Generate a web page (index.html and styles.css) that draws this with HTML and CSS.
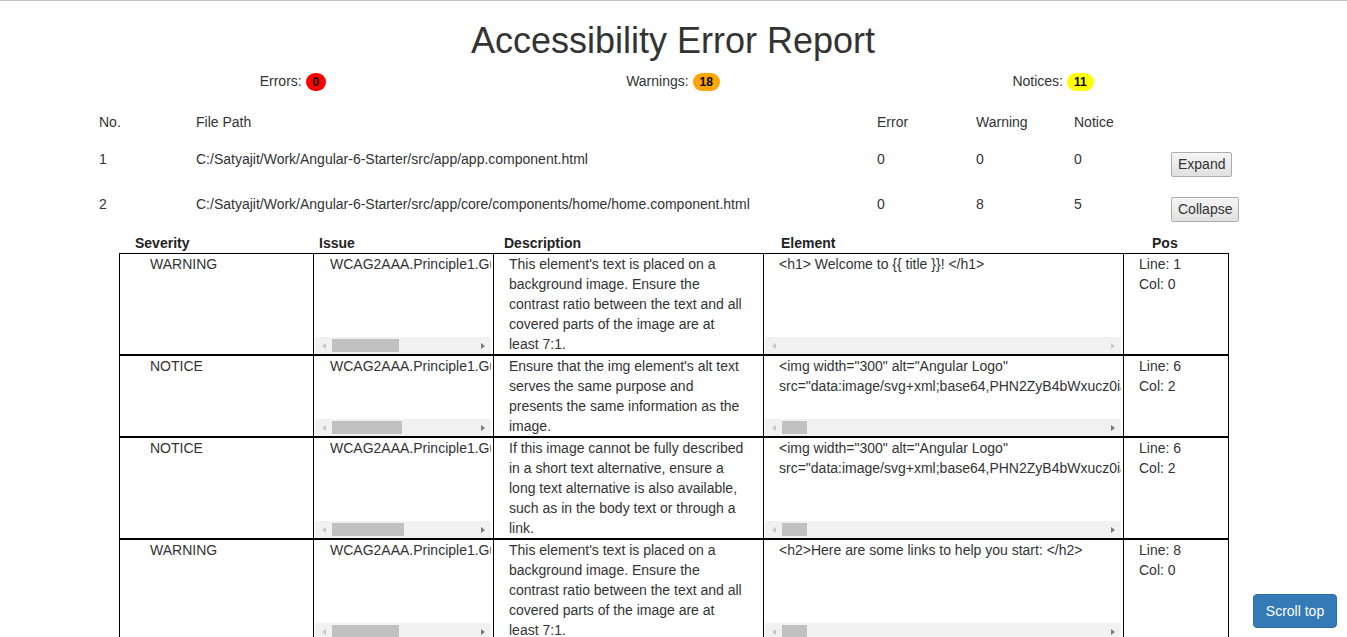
FILE: index.html
```html
<!DOCTYPE html>
<html lang="en">
<head>
<meta charset="utf-8">
<title>Accessibility Error Report</title>
<link rel="stylesheet" href="styles.css">
</head>
<body>
<div class="container">
  <h1 class="title">Accessibility Error Report</h1>
  <div class="stats">
    <div class="stat">Errors: <span class="badge badge-error">0</span></div>
    <div class="stat">Warnings: <span class="badge badge-warning">18</span></div>
    <div class="stat">Notices: <span class="badge badge-notice">11</span></div>
  </div>

  <div class="files">
    <div class="file-row file-head">
      <div class="c">No.</div>
      <div class="c">File Path</div>
      <div class="c">Error</div>
      <div class="c">Warning</div>
      <div class="c">Notice</div>
      <div class="c"></div>
    </div>
    <div class="file-row file-item">
      <div class="c">1</div>
      <div class="c">C:/Satyajit/Work/Angular-6-Starter/src/app/app.component.html</div>
      <div class="c">0</div>
      <div class="c">0</div>
      <div class="c">0</div>
      <div class="c"><button class="btn">Expand</button></div>
    </div>
    <div class="file-row file-item">
      <div class="c">2</div>
      <div class="c">C:/Satyajit/Work/Angular-6-Starter/src/app/core/components/home/home.component.html</div>
      <div class="c">0</div>
      <div class="c">8</div>
      <div class="c">5</div>
      <div class="c"><button class="btn">Collapse</button></div>
    </div>
  </div>

  <div class="details">
    <div class="det-head">
      <div class="h-sev">Severity</div>
      <div class="h-issue">Issue</div>
      <div class="h-desc">Description</div>
      <div class="h-el">Element</div>
      <div class="h-pos">Pos</div>
    </div>

    <div class="det-row">
      <div class="sev">WARNING</div>
      <div class="scroll-cell issue">
        <div class="scroll-text">WCAG2AAA.Principle1.Guideline1_4.1_4_6.G17.BgImage</div>
        <div class="hbar"><span class="arr arr-l off"></span><span class="thumb" style="width:67px"></span><span class="fill"></span><span class="arr arr-r"></span></div>
      </div>
      <div class="desc">This element's text is placed on a background image. Ensure the contrast ratio between the text and all covered parts of the image are at least 7:1.</div>
      <div class="scroll-cell element">
        <div class="scroll-text">&lt;h1&gt; Welcome to {{ title }}! &lt;/h1&gt;</div>
        <div class="hbar"><span class="arr arr-l off"></span><span class="fill"></span><span class="arr arr-r off"></span></div>
      </div>
      <div class="pos">Line: 1<br>Col: 0</div>
    </div>

    <div class="det-row">
      <div class="sev">NOTICE</div>
      <div class="scroll-cell issue">
        <div class="scroll-text">WCAG2AAA.Principle1.Guideline1_1.1_1_1.G94.Image</div>
        <div class="hbar"><span class="arr arr-l off"></span><span class="thumb" style="width:70px"></span><span class="fill"></span><span class="arr arr-r"></span></div>
      </div>
      <div class="desc">Ensure that the img element's alt text serves the same purpose and presents the same information as the image.</div>
      <div class="scroll-cell element">
        <div class="scroll-text">&lt;img width="300" alt="Angular Logo" <span class="nw">src="data:image/svg+xml;base64,PHN2ZyB4bWxucz0iaHR0cDovL3d3dy53My5vcmcvMjAwMC9zdmciIHZpZXdCb3g9IjAgMCAyNTAgMjUwIj4=" /&gt;</span></div>
        <div class="hbar"><span class="arr arr-l off"></span><span class="thumb" style="width:25px"></span><span class="fill"></span><span class="arr arr-r"></span></div>
      </div>
      <div class="pos">Line: 6<br>Col: 2</div>
    </div>

    <div class="det-row">
      <div class="sev">NOTICE</div>
      <div class="scroll-cell issue">
        <div class="scroll-text">WCAG2AAA.Principle1.Guideline1_1.1_1_1.G73,G74</div>
        <div class="hbar"><span class="arr arr-l off"></span><span class="thumb" style="width:72px"></span><span class="fill"></span><span class="arr arr-r"></span></div>
      </div>
      <div class="desc">If this image cannot be fully described in a short text alternative, ensure a long text alternative is also available, such as in the body text or through a link.</div>
      <div class="scroll-cell element">
        <div class="scroll-text">&lt;img width="300" alt="Angular Logo" <span class="nw">src="data:image/svg+xml;base64,PHN2ZyB4bWxucz0iaHR0cDovL3d3dy53My5vcmcvMjAwMC9zdmciIHZpZXdCb3g9IjAgMCAyNTAgMjUwIj4=" /&gt;</span></div>
        <div class="hbar"><span class="arr arr-l off"></span><span class="thumb" style="width:25px"></span><span class="fill"></span><span class="arr arr-r"></span></div>
      </div>
      <div class="pos">Line: 6<br>Col: 2</div>
    </div>

    <div class="det-row">
      <div class="sev">WARNING</div>
      <div class="scroll-cell issue">
        <div class="scroll-text">WCAG2AAA.Principle1.Guideline1_4.1_4_6.G17.BgImage</div>
        <div class="hbar"><span class="arr arr-l off"></span><span class="thumb" style="width:67px"></span><span class="fill"></span><span class="arr arr-r"></span></div>
      </div>
      <div class="desc">This element's text is placed on a background image. Ensure the contrast ratio between the text and all covered parts of the image are at least 7:1.</div>
      <div class="scroll-cell element">
        <div class="scroll-text">&lt;h2&gt;Here are some links to help you start: &lt;/h2&gt;</div>
        <div class="hbar"><span class="arr arr-l off"></span><span class="thumb" style="width:25px"></span><span class="fill"></span><span class="arr arr-r"></span></div>
      </div>
      <div class="pos">Line: 8<br>Col: 0</div>
    </div>
  </div>
</div>

<button class="scroll-top">Scroll top</button>
</body>
</html>
```

FILE: styles.css
```css
* {
  box-sizing: border-box;
}

html {
  overflow: hidden;
}

body {
  margin: 0;
  border-top: 1px solid #c4c4c4;
  font-family: "Liberation Sans", Arial, sans-serif;
  font-size: 14px;
  line-height: 20px;
  color: #333;
  background: #fff;
}

.container {
  margin: 0 104px 0 103px;
}

.title {
  margin: 20px 0 10px;
  font-size: 36px;
  line-height: 40px;
  font-weight: 400;
  text-align: center;
  color: #333;
}

/* summary counters */
.stats {
  display: grid;
  grid-template-columns: repeat(3, 1fr);
  margin-bottom: 13px;
}

.stat {
  text-align: center;
}

.badge {
  display: inline-block;
  min-width: 10px;
  padding: 3px 7px;
  font-size: 12px;
  font-weight: 700;
  line-height: 12px;
  color: #000;
  text-align: center;
  white-space: nowrap;
  vertical-align: middle;
  border-radius: 10px;
}

.badge-error {
  background: #ff0000;
}

.badge-warning {
  background: #ffa500;
}

.badge-notice {
  background: #ffff00;
}

/* file table */
.files {
  margin: 0 -12px;
}

.file-row {
  display: grid;
  grid-template-columns: 97px 681px 99px 98px 97px 1fr;
}

.file-row .c {
  padding: 8px 8px 0;
  white-space: nowrap;
}

.file-head {
  height: 37px;
}

.file-item {
  height: 45px;
}

.btn {
  display: block;
  margin-top: 3px;
  height: 25px;
  padding: 0 6px;
  font-family: "Liberation Sans", Arial, sans-serif;
  font-size: 14px;
  line-height: 23px;
  color: #333;
  background: linear-gradient(#f5f5f5, #e1e1e1);
  border: 1px solid #adadad;
  border-radius: 2px;
}

/* expanded details */
.details {
  margin-left: 16px;
  width: 1110px;
}

.det-head {
  display: grid;
  grid-template-columns: 193px 180px 270px 360px 105px;
  padding: 2px 0 0 1px;
  font-weight: 700;
  color: #222;
}

.h-sev { padding-left: 15px; }
.h-issue { padding-left: 6px; }
.h-desc { padding-left: 11px; }
.h-el { padding-left: 18px; }
.h-pos { padding-left: 29px; }

.det-row {
  display: grid;
  grid-template-columns: 193px 180px 270px 360px 105px;
  border: 1px solid #000;
}

.det-row > div {
  min-width: 0;
}

.det-row > div + div {
  border-left: 1px solid #000;
}

.sev {
  padding-left: 30px;
}

.desc {
  padding: 0 16px 0 15px;
}

.pos {
  padding-left: 15px;
}

.scroll-cell {
  display: flex;
  flex-direction: column;
  padding: 0 2px 0 1px;
}

.scroll-text {
  flex: 1;
  overflow: hidden;
  white-space: nowrap;
}

.issue .scroll-text {
  padding-left: 15px;
}

.element .scroll-text {
  padding-left: 14px;
  white-space: normal;
}

.nw {
  white-space: nowrap;
}

/* classic horizontal scrollbar */
.hbar {
  display: flex;
  flex: none;
  height: 17px;
  background: #f1f1f1;
}

.arr {
  display: flex;
  flex: none;
  align-items: center;
  justify-content: center;
  width: 17px;
  height: 17px;
}

.arr::before {
  content: "";
  border-top: 3.5px solid transparent;
  border-bottom: 3.5px solid transparent;
}

.arr-l::before {
  border-right: 4px solid #7a7a7a;
}

.arr-r::before {
  border-left: 4px solid #7a7a7a;
}

.arr-l.off::before {
  border-right-color: #c8c8c8;
}

.arr-r.off::before {
  border-left-color: #c8c8c8;
}

.thumb {
  flex: none;
  height: 13px;
  margin-top: 2px;
  background: #c1c1c1;
}

.fill {
  flex: 1;
}

/* floating button */
.scroll-top {
  position: fixed;
  right: 10px;
  bottom: 9px;
  width: 84px;
  height: 34px;
  padding: 6px 0;
  font-family: "Liberation Sans", Arial, sans-serif;
  font-size: 14px;
  line-height: 20px;
  color: #fff;
  text-align: center;
  background: #337ab7;
  border: 1px solid #2e6da4;
  border-radius: 4px;
}
```
